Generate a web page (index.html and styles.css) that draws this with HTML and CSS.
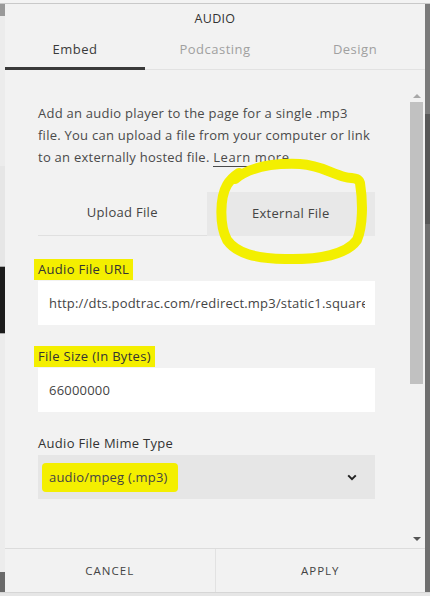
FILE: index.html
```html
<!DOCTYPE html>
<html>
<head>
<meta charset="utf-8">
<link rel="stylesheet" href="styles.css">
</head>
<body>
<div class="page">
  <div class="topstrip"></div>
  <div class="row">
    <div class="leftstrip">
      <div class="ls ls-a"></div>
      <div class="ls ls-b"></div>
      <div class="ls ls-c"></div>
      <div class="ls ls-d"></div>
      <div class="ls ls-e"></div>
      <div class="ls ls-f"></div>
    </div>
    <div class="dialog">
      <div class="header">
        <div class="title">AUDIO</div>
        <div class="tabs">
          <div class="tab active">Embed</div>
          <div class="tab">Podcasting</div>
          <div class="tab">Design</div>
        </div>
      </div>
      <div class="body">
        <div class="content">
          <p class="intro">Add an audio player to the page for a single .mp3<br>file. You can upload a file from your computer or link<br>to an externally hosted file. <span class="link">Learn more</span></p>
          <div class="segment">
            <div class="seg">Upload File</div>
            <div class="seg selected">External File</div>
          </div>
          <div class="field">
            <div class="label"><span class="hl">Audio File URL</span></div>
            <div class="input"><span class="clip">http://dts.podtrac.com/redirect.mp3/static1.squarespace.com</span></div>
          </div>
          <div class="field">
            <div class="label"><span class="hl">File Size (In Bytes)</span></div>
            <div class="input">66000000</div>
          </div>
          <div class="field">
            <div class="label">Audio File Mime Type</div>
            <div class="select">
              <span class="hl hl-sel">audio/mpeg (.mp3)</span>
              <svg class="chev" width="10" height="7" viewBox="0 0 10 7"><path d="M1.2 1.4 L5 5.2 L8.8 1.4" fill="none" stroke="#222" stroke-width="2"/></svg>
            </div>
          </div>
        </div>
        <div class="scrollbar">
          <div class="arrow up"></div>
          <div class="thumb"></div>
          <div class="arrow down"></div>
        </div>
      </div>
      <div class="footer">
        <div class="btn">CANCEL</div>
        <div class="btn">APPLY</div>
      </div>
      <svg class="scribble" width="175" height="120" viewBox="0 0 175 120">
        <path d="M30 29 C45 17 70 13 95 14 C115 15 125 23 140 27 C148 29 153 27 155 33 C158 52 158 76 152 90 C142 104 115 110 80 109 C50 108 32 104 22 90 C14 75 15 47 22 35 C25 30 28 27 34 23" fill="none" stroke="#f3ef00" stroke-width="10" stroke-linecap="round" stroke-linejoin="round"/>
      </svg>
    </div>
    <div class="rightstrip">
      <div class="rs rs-a"></div>
      <div class="rs rs-b"></div>
      <div class="rs rs-c"></div>
    </div>
  </div>
  <div class="bottomstrip"></div>
</div>
</body>
</html>
```
FILE: styles.css
```css
html, body {
  margin: 0;
  padding: 0;
}
body {
  width: 430px;
  height: 596px;
  overflow: hidden;
  background: #ececec;
  font-family: "Open Sans", "Liberation Sans", sans-serif;
  color: #333;
}
.page {
  display: flex;
  flex-direction: column;
  height: 596px;
}
.topstrip {
  height: 4px;
  background: #f3f3f3;
  border-bottom: 1px solid #c9c9c9;
  box-sizing: border-box;
}
.row {
  display: flex;
  height: 588px;
}
.bottomstrip {
  height: 4px;
  background: #e6e6e6;
  border-top: 1px solid #d6d6d6;
  box-sizing: border-box;
}
.leftstrip {
  width: 5px;
  display: flex;
  flex-direction: column;
  background: #e4e4e4;
}
.ls-a { height: 12px; background: #9a9a9a; }
.ls-b { height: 150px; background: #ececec; }
.ls-c { height: 100px; background: #e6e6e6; border-bottom: 1px solid #aaa; }
.ls-d { height: 66px; background: #1c1c1c; }
.ls-e { height: 238px; background: #ececec; border-top: 1px solid #aaa; }
.ls-f { flex: 1; background: #6a6a6a; }
.rightstrip {
  width: 5px;
  display: flex;
  flex-direction: column;
  background: #6e6e6e;
}
.rs-a { height: 110px; background: #7a7a7a; }
.rs-b { height: 110px; background: #585858; }
.rs-c { flex: 1; background: #6e6e6e; }

.dialog {
  width: 420px;
  position: relative;
  background: #f2f2f2;
  display: flex;
  flex-direction: column;
}
.header {
  height: 66px;
  display: flex;
  flex-direction: column;
}
.title {
  text-align: center;
  font-size: 12.5px;
  letter-spacing: 0.3px;
  line-height: 18px;
  padding-top: 6px;
  color: #333;
}
.tabs {
  display: flex;
  margin-top: 6px;
}
.tab {
  flex: 1;
  text-align: center;
  font-size: 13px;
  letter-spacing: 0.5px;
  line-height: 18px;
  padding: 6px 0 11px;
  color: #a0a0a0;
  border-bottom: 1px solid #e2e2e2;
}
.tab.active {
  color: #3a3a3a;
  border-bottom: 3px solid #3a3a3a;
  padding-bottom: 9px;
}
.body {
  flex: 1;
  display: flex;
  min-height: 0;
  overflow: hidden;
}
.content {
  flex: 1;
  padding: 32px 0 0 33px;
}
.intro {
  margin: 0;
  font-size: 13px;
  line-height: 22px;
  color: #4a4a4a;
  letter-spacing: 0.25px;
  white-space: nowrap;
}
.link {
  border-bottom: 1px solid #4a4a4a;
  letter-spacing: 0.6px;
}
.segment {
  display: flex;
  width: 337px;
  margin-top: 24px;
  height: 44px;
}
.seg {
  flex: 1;
  display: flex;
  align-items: center;
  justify-content: center;
  font-size: 13px;
  color: #444;
  letter-spacing: 0.3px;
  border-bottom: 1px solid #e0e0e0;
  padding-bottom: 3px;
  box-sizing: border-box;
}
.seg.selected {
  background: #e8e8e8;
  border-bottom: none;
}
.field {
  margin-top: 24px;
  width: 337px;
}
.field + .field {
  margin-top: 22px;
}
.label {
  font-size: 13px;
  line-height: 18px;
  color: #333;
  letter-spacing: 0.3px;
  margin-bottom: 3px;
}
.hl {
  background: #f4ef00;
  padding: 1px 4px 2px;
  margin-left: -4px;
}
.input {
  background: #fff;
  height: 44px;
  box-sizing: border-box;
  padding: 0 0 0 11px;
  display: flex;
  align-items: center;
  font-size: 13px;
  color: #444;
  letter-spacing: 0.2px;
  white-space: nowrap;
  overflow: hidden;
}
.clip {
  display: block;
  width: 316px;
  overflow: hidden;
}
.select {
  background: #e6e6e6;
  height: 44px;
  box-sizing: border-box;
  padding: 0 18px 0 11px;
  display: flex;
  align-items: center;
  justify-content: space-between;
  font-size: 13px;
  color: #444;
  letter-spacing: 0.2px;
}
.hl-sel {
  padding: 5px 10px 6px 7px;
  margin-left: -7px;
  border-radius: 4px;
}
.scrollbar {
  width: 17px;
  display: flex;
  flex-direction: column;
  align-items: center;
  padding-top: 24px;
}
.arrow {
  width: 0;
  height: 0;
  border-left: 4px solid transparent;
  border-right: 4px solid transparent;
}
.arrow.up {
  border-bottom: 4px solid #a8a8a8;
  margin-bottom: 4px;
}
.thumb {
  width: 13px;
  height: 282px;
  background: #c1c1c1;
}
.arrow.down {
  border-top: 4px solid #555;
  margin-top: 153px;
}
.footer {
  height: 43px;
  display: flex;
  border-top: 1px solid #dcdcdc;
}
.btn {
  flex: 1;
  display: flex;
  align-items: center;
  justify-content: center;
  font-size: 11.5px;
  letter-spacing: 1px;
  color: #444;
}
.btn + .btn {
  border-left: 1px solid #e2e2e2;
}
.chev {
  display: block;
}
.scribble {
  position: absolute;
  left: 200px;
  top: 146px;
}
```
